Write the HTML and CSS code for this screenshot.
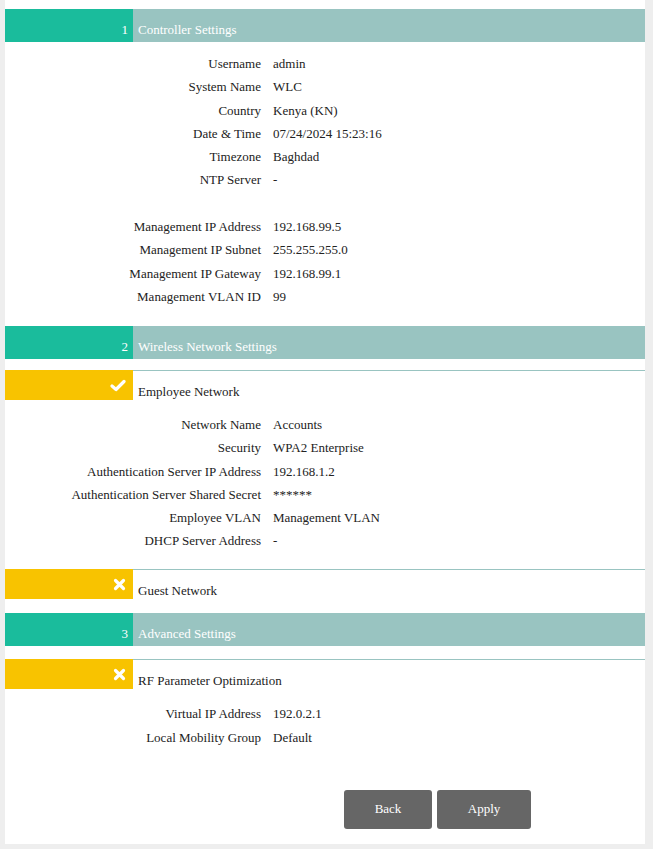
FILE: index.html
```html
<!DOCTYPE html>
<html>
<head>
<meta charset="utf-8">
<link rel="stylesheet" href="styles.css">
</head>
<body>
<div class="page">
  <div class="sec-head"><div class="num">1</div><div class="title">Controller Settings</div></div>
  <div class="rows rows-first">
    <div class="lbl">Username</div><div class="val">admin</div>
    <div class="lbl">System Name</div><div class="val">WLC</div>
    <div class="lbl">Country</div><div class="val">Kenya (KN)</div>
    <div class="lbl">Date &amp; Time</div><div class="val">07/24/2024 15:23:16</div>
    <div class="lbl">Timezone</div><div class="val">Baghdad</div>
    <div class="lbl">NTP Server</div><div class="val">-</div>
    <div class="lbl">&nbsp;</div><div class="val">&nbsp;</div>
    <div class="lbl">Management IP Address</div><div class="val">192.168.99.5</div>
    <div class="lbl">Management IP Subnet</div><div class="val">255.255.255.0</div>
    <div class="lbl">Management IP Gateway</div><div class="val">192.168.99.1</div>
    <div class="lbl">Management VLAN ID</div><div class="val">99</div>
  </div>

  <div class="sec-head sec2"><div class="num">2</div><div class="title">Wireless Network Settings</div></div>
  <div class="sub-head">
    <div class="flag">
      <svg width="16" height="13" viewBox="0 0 16 13"><path d="M2 7 L6 10.5 L14 2.5" fill="none" stroke="#fff" stroke-width="3.2" stroke-linecap="round" stroke-linejoin="round"/></svg>
    </div>
    <div class="sub-title">Employee Network</div>
  </div>
  <div class="rows">
    <div class="lbl">Network Name</div><div class="val">Accounts</div>
    <div class="lbl">Security</div><div class="val">WPA2 Enterprise</div>
    <div class="lbl">Authentication Server IP Address</div><div class="val">192.168.1.2</div>
    <div class="lbl">Authentication Server Shared Secret</div><div class="val">******</div>
    <div class="lbl">Employee VLAN</div><div class="val">Management VLAN</div>
    <div class="lbl">DHCP Server Address</div><div class="val">-</div>
  </div>
  <div class="sub-head sub-guest">
    <div class="flag">
      <svg width="13" height="13" viewBox="0 0 13 13"><path d="M2.5 2.5 L10.5 10.5 M10.5 2.5 L2.5 10.5" fill="none" stroke="#fff" stroke-width="3.2" stroke-linecap="round"/></svg>
    </div>
    <div class="sub-title">Guest Network</div>
  </div>

  <div class="sec-head sec3"><div class="num">3</div><div class="title">Advanced Settings</div></div>
  <div class="sub-head sub-rf">
    <div class="flag">
      <svg width="13" height="13" viewBox="0 0 13 13"><path d="M2.5 2.5 L10.5 10.5 M10.5 2.5 L2.5 10.5" fill="none" stroke="#fff" stroke-width="3.2" stroke-linecap="round"/></svg>
    </div>
    <div class="sub-title">RF Parameter Optimization</div>
  </div>
  <div class="rows rows-last">
    <div class="lbl">Virtual IP Address</div><div class="val">192.0.2.1</div>
    <div class="lbl">Local Mobility Group</div><div class="val">Default</div>
  </div>

  <div class="actions">
    <button class="btn btn-back">Back</button>
    <button class="btn btn-apply">Apply</button>
  </div>
</div>
</body>
</html>
```

FILE: styles.css
```css
html, body {
  margin: 0;
  padding: 0;
  background: #eeeeee;
}
body {
  font-family: "Liberation Serif", "Times New Roman", "DejaVu Serif", serif;
  font-size: 13px;
  color: #222;
}
.page {
  width: 640px;
  margin-left: 5px;
  background: #fff;
  padding-top: 9px;
  min-height: 835px;
}
.sec-head {
  display: flex;
  height: 33px;
  color: #fff;
}
.sec-head .num {
  width: 123px;
  padding-right: 5px;
  background: #1abc9c;
  text-align: right;
  line-height: 41px;
}
.sec-head .title {
  flex: 1;
  background: #99c4c1;
  padding-left: 5px;
  line-height: 41px;
}
.sec2 { margin-top: 18px; }
.sec3 { margin-top: 13px; }
.rows {
  display: grid;
  grid-template-columns: 256px 1fr;
  column-gap: 12px;
  margin-top: 12px;
  line-height: 23.2px;
}
.rows-first {
  margin-top: 10px;
  line-height: 23.3px;
}
.rows-last { margin-top: 12px; }
.lbl {
  text-align: right;
  white-space: nowrap;
}
.val {
  white-space: nowrap;
}
.sub-head {
  display: flex;
  height: 30px;
  margin-top: 11px;
  border-top: 1px solid #99c4c1;
}
.sub-rf { margin-top: 13px; }
.sub-head .flag {
  width: 128px;
  margin-top: -1px;
  height: 30px;
  background: #f8c300;
  display: flex;
  align-items: center;
  justify-content: flex-end;
  box-sizing: border-box;
  padding-right: 7px;
}
.sub-head .flag svg { display: block; }
.sub-title {
  padding-left: 5px;
  padding-top: 13px;
  line-height: 15px;
}
.sub-guest { margin-top: 17px; }
.actions {
  display: flex;
  gap: 5px;
  padding-left: 339px;
  margin-top: 41px;
}
.btn {
  font-family: "Liberation Serif", "Times New Roman", serif;
  font-size: 13px;
  color: #fff;
  background: #666666;
  border: none;
  border-radius: 3px;
  height: 39px;
  padding: 0;
}
.btn-back { width: 88px; }
.btn-apply { width: 94px; }
```
